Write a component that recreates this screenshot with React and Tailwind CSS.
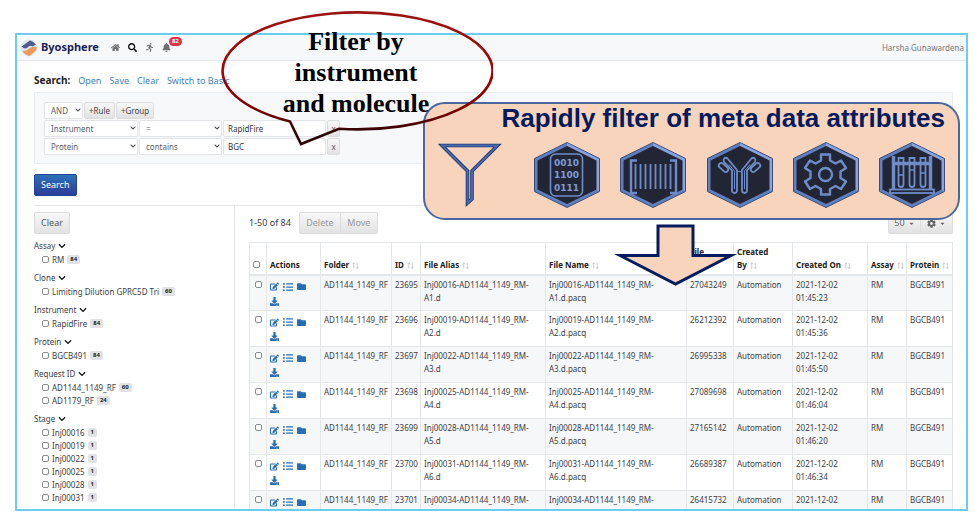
import React from "react";
import {
  FaBell,
  FaCaretDown,
  FaChevronDown,
  FaCog,
  FaDownload,
  FaEdit,
  FaFolder,
  FaHome,
  FaListUl,
  FaRunning,
  FaSearch,
} from "react-icons/fa";

const facets = [
  { name: "Assay", items: [["RM", 84]] },
  { name: "Clone", items: [["Limiting Dilution GPRC5D Tri", 60]] },
  { name: "Instrument", items: [["RapidFire", 84]] },
  { name: "Protein", items: [["BGCB491", 84]] },
  { name: "Request ID", items: [["AD1144_1149_RF", 60], ["AD1179_RF", 24]] },
  {
    name: "Stage",
    items: [
      ["Inj00016", 1],
      ["Inj00019", 1],
      ["Inj00022", 1],
      ["Inj00025", 1],
      ["Inj00028", 1],
      ["Inj00031", 1],
    ],
  },
];

const rows = [
  ["23695", "Inj00016", "A1", "27043249", "01:45:23"],
  ["23696", "Inj00019", "A2", "26212392", "01:45:36"],
  ["23697", "Inj00022", "A3", "26995338", "01:45:50"],
  ["23698", "Inj00025", "A4", "27089698", "01:46:04"],
  ["23699", "Inj00028", "A5", "27165142", "01:46:20"],
  ["23700", "Inj00031", "A6", "26689387", "01:46:34"],
  ["23701", "Inj00034", "A7", "26415732", "01:46:47"],
];

const grayButton =
  "flex items-center justify-center border border-[#dcdcdc] bg-gradient-to-b from-[#f8f8f8] to-[#e2e2e2]";

function Checkbox(props) {
  return (
    <input
      type="checkbox"
      className="size-[7px] shrink-0 appearance-none rounded-[2px] border border-[#8c8c8c] bg-white checked:bg-[#2a6db5]"
      {...props}
    />
  );
}

function Logo() {
  return (
    <svg viewBox="0 0 18 18" className="size-[18px]" aria-hidden="true">
      <circle cx="9" cy="9" r="8.5" fill="#dbe8f0" />
      <path d="M1.500 7.500L10 1.500Q13 2 16 5.500L12.500 7.500Q10 5.500 7.500 8.500Q5 11 1.500 7.500Z" fill="#525c8c" />
      <path d="M2.500 12Q6 12.500 9 9.500Q12 7 16.800 8Q17 10 15.500 12L9.500 17Q5 16 2.500 12Z" fill="#ee9a5b" />
    </svg>
  );
}

function Picker({ label, value, className }) {
  return (
    <div className={"relative h-[17px] " + className}>
      <select
        aria-label={label}
        className="h-full w-full appearance-none rounded-[2px] border border-[#e2e4e7] bg-white pl-1.5 text-[8px] leading-[14px] text-[#5b6066]"
      >
        <option>{value}</option>
      </select>
      <FaChevronDown className="pointer-events-none absolute top-[5px] right-[2px] size-[6px] text-[#444]" />
    </div>
  );
}

function Rule({ field, op, value }) {
  return (
    <div className="flex gap-px">
      <Picker label="Field" value={field} className="w-[94px]" />
      <Picker label="Operator" value={op} className="w-[83px]" />
      <input
        type="text"
        aria-label="Value"
        defaultValue={value}
        className="h-[17px] w-[103px] rounded-[2px] border border-[#e2e4e7] bg-white px-1 text-[8px] text-[#333]"
      />
      <button type="button" className={grayButton + " w-[13px] rounded-[2px] text-[8px] text-[#555]"}>
        x
      </button>
    </div>
  );
}

function SortMark() {
  return (
    <svg viewBox="0 0 8 8" className="ml-[3px] inline size-[7px] align-[-1px]" fill="none" stroke="#b5b8bc" strokeWidth="0.8" aria-hidden="true">
      <path d="M2 7.5V1M0.6 2.4L2 1l1.4 1.4M6 1v6.5M4.6 6L6 7.5 7.4 6" />
    </svg>
  );
}

function Facet({ name, items }) {
  return (
    <section className="mb-[5px]">
      <h3 className="flex h-[14px] items-center gap-[3px]">
        {name}
        <FaChevronDown className="size-2 text-[#111]" />
      </h3>
      <ul className="pl-2">
        {items.map(([label, count]) => (
          <li key={label} className="flex h-[13px] items-center">
            <label className="flex items-center gap-[3px]">
              <Checkbox />
              {label}
            </label>
            <span className="ml-[3px] rounded-[2px] bg-[#e0e2e6] px-[3px] text-[6px] leading-[9px] font-bold text-[#222]">
              {count}
            </span>
          </li>
        ))}
      </ul>
    </section>
  );
}

function Results() {
  const th = "border border-[#e4e7ea] px-[3px] pb-[3px] text-left align-bottom font-bold text-[#222]";
  const td = "border border-[#e4e7ea] px-[3px] pt-[2px] align-top";
  return (
    <table className="w-full table-fixed border-collapse text-[8px] leading-[13px] text-[#3c4045]">
      <colgroup>
        <col className="w-[17px]" />
        <col className="w-[54px]" />
        <col className="w-[71px]" />
        <col className="w-[29px]" />
        <col className="w-[125px]" />
        <col className="w-[141px]" />
        <col className="w-[47px]" />
        <col className="w-[59px]" />
        <col className="w-[75px]" />
        <col className="w-[39px]" />
        <col className="w-[46px]" />
      </colgroup>
      <thead>
        <tr className="h-8 border-b-2 border-b-[#e4e7ea]">
          <th className={th + " text-center"}>
            <Checkbox aria-label="Select all" />
          </th>
          <th className={th}>Actions</th>
          <th className={th}>Folder<SortMark /></th>
          <th className={th + " whitespace-nowrap"}>ID<SortMark /></th>
          <th className={th}>File Alias<SortMark /></th>
          <th className={th}>File Name<SortMark /></th>
          <th className={th}>File<br />Size</th>
          <th className={th}>Created<br />By<SortMark /></th>
          <th className={th}>Created On<SortMark /></th>
          <th className={th + " whitespace-nowrap"}>Assay<SortMark /></th>
          <th className={th + " whitespace-nowrap"}>Protein<SortMark /></th>
        </tr>
      </thead>
      <tbody>
        {rows.map(([id, inj, well, size, time]) => (
          <tr key={id} className="h-9 odd:bg-[#f6f7f9]">
            <td className={td + " text-center"}>
              <Checkbox aria-label={"Select " + id} />
            </td>
            <td className={td}>
              <div className="flex flex-wrap gap-x-1 gap-y-[5px] pt-1 text-[#2a6db5]">
                <button type="button" aria-label="Edit"><FaEdit className="size-[9px]" /></button>
                <button type="button" aria-label="Details"><FaListUl className="size-[10px]" /></button>
                <button type="button" aria-label="Open folder"><FaFolder className="size-[9px]" /></button>
                <button type="button" aria-label="Download"><FaDownload className="size-[9px]" /></button>
              </div>
            </td>
            <td className={td}>AD1144_1149_RF</td>
            <td className={td}>{id}</td>
            <td className={td}>{inj}-AD1144_1149_RM-<br />{well}.d</td>
            <td className={td}>{inj}-AD1144_1149_RM-<br />{well}.d.pacq</td>
            <td className={td}>{size}</td>
            <td className={td}>Automation</td>
            <td className={td}>2021-12-02<br />{time}</td>
            <td className={td}>RM</td>
            <td className={td}>BGCB491</td>
          </tr>
        ))}
      </tbody>
    </table>
  );
}

function Hexagon({ children }) {
  return (
    <svg viewBox="0 0 66 66" className="size-[66px]" fill="none" stroke="#6f8cc9" strokeWidth="2" aria-hidden="true">
      <path d="M33 0.5L65.5 16.5V49.5L33 65.5L0.5 49.5V16.5Z" fill="#5f7fc0" stroke="#3a4d78" strokeWidth="1" />
      <path d="M33 1L65 17V49L62 47.500V18.500L33 4Z" fill="#8aa3de" stroke="none" />
      <path d="M33 4L62.500 18.500V47.500L33 62L3.500 47.500V18.500Z" fill="#222634" stroke="none" />
      {children}
    </svg>
  );
}

function AttributePanel() {
  return (
    <section className="absolute top-[102px] left-[423px] h-[118px] w-[537px] rounded-[22px] border-2 border-[#4a689f] bg-[#f8d4bc] pr-[13px] pl-[13px]">
      <h2 className="text-right font-['Liberation_Sans',Arial,sans-serif] text-[26px] leading-[28px] font-bold whitespace-nowrap text-[#041c5e]">
        Rapidly filter of meta data attributes
      </h2>
      <div className="mt-2.5 flex items-start justify-between">
        <svg viewBox="0 0 64 66" className="mr-3 h-[66px] w-16" fill="none" aria-hidden="true">
          <path d="M4 3.500H59.500L34 29V57L29.500 61V29Z" stroke="#20366b" strokeWidth="3.6" />
          <path d="M4 3.500H59.500L34 29V57L29.500 61V29Z" stroke="#4a6cb3" strokeWidth="1.8" />
        </svg>
        <Hexagon>
          <rect x="16.500" y="12" width="32" height="42" rx="5" strokeWidth="1.6" />
          <g fill="#7f9ad4" stroke="none" fontFamily="'DejaVu Sans', sans-serif" fontWeight="bold" fontSize="9" textAnchor="middle">
            <text x="32.500" y="23.500">0010</text>
            <text x="32.500" y="36">1100</text>
            <text x="32.500" y="49">0111</text>
          </g>
        </Hexagon>
        <Hexagon>
          <path d="M17 18.500H11V51H17M50 18.500H56V51H50" strokeWidth="2.4" />
          <path d="M15.500 22V47M20.500 22V47M25.500 22V47M30.500 22V47M35.500 22V47M40.500 22V47M45.500 22V47M50.500 22V47" strokeWidth="1.8" />
        </Hexagon>
        <Hexagon>
          <path
            d="M30 28L20.500 16.500Q18.800 15 17.200 16.500Q15.800 18 17 19.800L25 28.500V48.500Q25.200 51 27.500 51Q29.800 51 30 48.500ZM35 28L44.500 16.500Q46.200 15 47.800 16.500Q49.200 18 48 19.800L40 28.500V48.500Q39.800 51 37.500 51Q35.200 51 35 48.500Z"
            strokeWidth="1.8"
            strokeLinejoin="round"
          />
          <path d="M30 29.500H35M22 22.500L27.500 29V47M43 22.500L37.500 29V47" strokeWidth="1" />
          <rect x="-5.500" y="-2.500" width="11" height="5" rx="2.500" transform="translate(16.500 25.500) rotate(42)" strokeWidth="1.800" />
          <rect x="-5.500" y="-2.500" width="11" height="5" rx="2.500" transform="translate(48.500 25.500) rotate(-42)" strokeWidth="1.800" />
        </Hexagon>
        <Hexagon>
          <circle cx="32.500" cy="32.500" r="6.500" strokeWidth="2.400" />
          <path
            d="M28 12.500H37V18.500L42.500 21.500L48 18.500L53 26L47.500 29.500V36L53 39.500L48 47L42.500 44L37 47V52.500H28V47L22.500 44L17 47L12 39.500L17.500 36V29.500L12 26L17 18.500L22.500 21.500L28 18.500Z"
            strokeWidth="2.400"
            strokeLinejoin="round"
          />
        </Hexagon>
        <Hexagon>
          <path d="M14.500 14V47M51.500 14V47" strokeWidth="3.4" />
          <path d="M14.500 21.500H51.500" strokeWidth="3.4" />
          <rect x="11" y="47.500" width="44" height="3.500" strokeWidth="1.800" />
          <path d="M19.500 16H24.500V42Q24.500 45 22 45Q19.500 45 19.500 42ZM30.500 16H35.500V42Q35.500 45 33 45Q30.500 45 30.500 42ZM41.500 16H46.500V42Q46.500 45 44 45Q41.500 45 41.500 42Z" strokeWidth="1.800" />
          <path d="M20 33H24M31 28H35M42 31H46" strokeWidth="1.400" />
        </Hexagon>
      </div>
    </section>
  );
}

function Callout() {
  return (
    <div className="pointer-events-none absolute top-[10px] left-[219px] h-[138px] w-[274px]">
      <svg viewBox="0 0 274 138" className="absolute inset-0 size-full" fill="none" aria-hidden="true">
        <defs>
          <linearGradient id="calloutEdge" x1="0" y1="0" x2="0" y2="1">
            <stop offset="0" stopColor="#9a1414" />
            <stop offset="0.5" stopColor="#a30000" />
            <stop offset="0.75" stopColor="#780000" />
            <stop offset="0.92" stopColor="#2a0505" />
          </linearGradient>
        </defs>
        <path d="M71 111.500A135 58.500 0 1 1 120 118.800L82 134Z" stroke="url(#calloutEdge)" strokeWidth="2.6" />
      </svg>
      <p className="relative pt-4 text-center font-['Liberation_Serif','Times_New_Roman',serif] text-[26px] leading-[31px] font-bold text-black">
        Filter by
        <br />
        instrument
        <br />
        and molecule
      </p>
    </div>
  );
}

export default function App() {
  return (
    <div className="relative h-screen overflow-hidden bg-white pt-[33px] pr-[7px] pb-[5px] pl-[15px] font-['Noto_Sans','Open_Sans',sans-serif] text-[8px] text-[#3c4045]">
      <div className="flex h-full flex-col overflow-hidden border-2 border-[#6ccdf3] bg-white">
        <header className="flex h-[26px] shrink-0 items-center border-b border-[#e6e8eb] bg-[#f7f8fa] pr-0.5 pl-[3px]">
          <Logo />
          <span className="ml-[3px] text-[11px] font-bold text-[#1c2357]">Byosphere</span>
          <nav className="ml-3 flex items-center gap-2 text-[#6d6d6d]">
            <a href="#home" aria-label="Home"><FaHome className="size-[9px]" /></a>
            <a href="#search" aria-label="Search" className="text-[#111]"><FaSearch className="size-[9px]" /></a>
            <a href="#activity" aria-label="Activity"><FaRunning className="size-[9px]" /></a>
            <a href="#alerts" aria-label="Alerts" className="relative">
              <FaBell className="size-[9px]" />
              <span className="absolute -top-[6px] left-[7px] rounded-full bg-[#dc3545] px-[3px] text-[6px] leading-[9px] font-bold text-white">
                82
              </span>
            </a>
          </nav>
          <span className="ml-auto text-[#777]">Harsha Gunawardena</span>
        </header>

        <main className="flex min-h-0 grow flex-col pr-[13px] pl-[17px]">
          <div className="mt-3 flex h-[15px] items-center gap-2 text-[9px] text-[#3f7fbf]">
            <h1 className="text-[10px] font-bold text-[#222]">Search:</h1>
            <a href="#open">Open</a>
            <a href="#save">Save</a>
            <a href="#clear">Clear</a>
            <a href="#basic">Switch to Basic</a>
          </div>

          <form className="mt-1 shrink-0">
            <fieldset className="flex flex-col gap-px border border-[#ebedef] bg-[#f7f8fa] px-[9px] pt-[9px] pb-2">
              <div className="flex gap-px">
                <Picker label="Combine rules with" value="AND" className="w-[39px]" />
                <button type="button" className={grayButton + " w-[31px] rounded-[2px] text-[8px] text-[#444]"}>+Rule</button>
                <button type="button" className={grayButton + " w-[38px] rounded-[2px] text-[8px] text-[#444]"}>+Group</button>
              </div>
              <Rule field="Instrument" op="=" value="RapidFire" />
              <Rule field="Protein" op="contains" value="BGC" />
            </fieldset>
            <button
              type="submit"
              className="mt-[10px] h-[22px] rounded-[2px] border border-[#24449a] bg-gradient-to-b from-[#2b71b8] to-[#2c3b98] px-1.5 text-[9px] text-white"
            >
              Search
            </button>
          </form>

          <div className="mt-[9px] flex min-h-0 grow border-t border-[#e4e6e9]">
            <aside className="w-[201px] shrink-0 border-r border-[#e4e6e9] pt-1.5">
              <button type="button" className={grayButton + " mb-[5px] h-[22px] w-9 rounded-[2px] text-[9px] text-[#555]"}>
                Clear
              </button>
              {facets.map((facet) => (
                <Facet key={facet.name} {...facet} />
              ))}
            </aside>

            <section className="min-w-0 grow pt-1.5 pl-[14px]">
              <div className="mb-2 flex h-[22px] items-center text-[9px]">
                <span>1-50 of 84</span>
                <div className="ml-2 flex h-full">
                  <button type="button" className={grayButton + " w-[42px] rounded-l-[2px] text-[#999]"}>Delete</button>
                  <button type="button" className={grayButton + " w-[37px] rounded-r-[2px] border-l-0 text-[#999]"}>Move</button>
                </div>
                <div className="ml-auto flex h-full text-[#666]">
                  <button type="button" className={grayButton + " w-[33px] gap-[3px] rounded-l-[2px]"}>
                    50
                    <FaCaretDown className="size-[7px]" />
                  </button>
                  <button type="button" aria-label="Table settings" className={grayButton + " w-8 gap-[3px] rounded-r-[2px] border-l-0"}>
                    <FaCog className="size-[9px]" />
                    <FaCaretDown className="size-[7px]" />
                  </button>
                </div>
              </div>
              <Results />
            </section>
          </div>
        </main>
      </div>

      <AttributePanel />
      <svg viewBox="0 0 124 66" className="absolute top-[222px] left-[614px] h-[66px] w-[124px]" aria-hidden="true">
        <path d="M44 4H79V33.500H117L61.500 62L6 33.500H44Z" fill="#f8d4bc" stroke="#041c5e" strokeWidth="3" strokeMiterlimit="8" />
      </svg>
      <Callout />
    </div>
  );
}
